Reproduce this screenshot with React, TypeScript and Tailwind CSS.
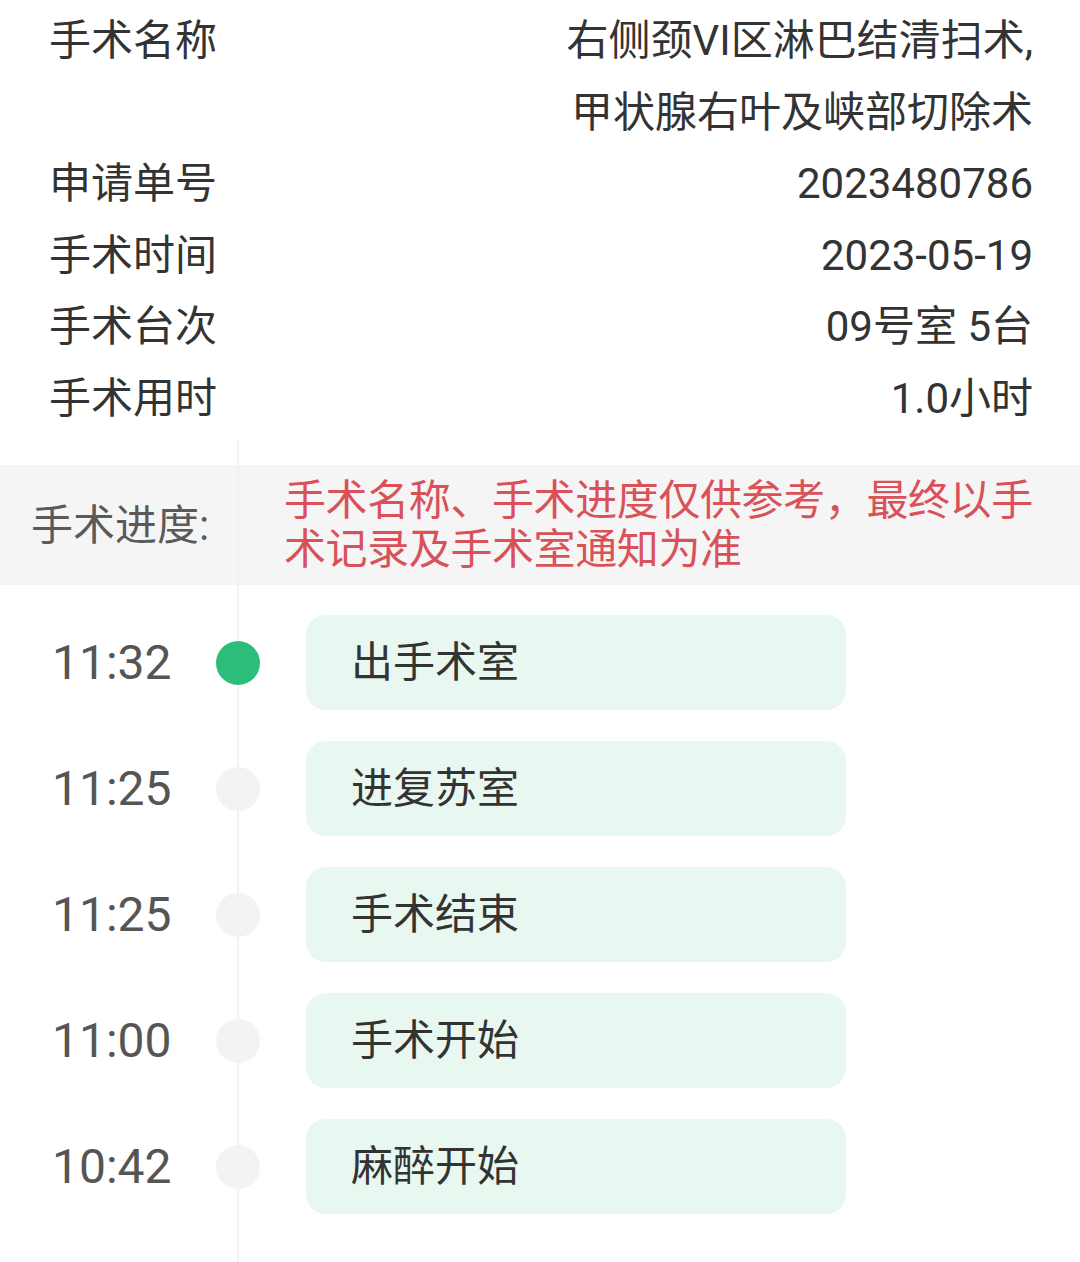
import React from "react";

const INFO = [
  { label: "手术名称", value: ["右侧颈VI区淋巴结清扫术,", "甲状腺右叶及峡部切除术"] },
  { label: "申请单号", value: ["2023480786"] },
  { label: "手术时间", value: ["2023-05-19"] },
  { label: "手术台次", value: ["09号室 5台"] },
  { label: "手术用时", value: ["1.0小时"] },
];

const STEPS = [
  { time: "11:32", name: "出手术室", active: true },
  { time: "11:25", name: "进复苏室" },
  { time: "11:25", name: "手术结束" },
  { time: "11:00", name: "手术开始" },
  { time: "10:42", name: "麻醉开始" },
];

export default function App() {
  return (
    <div
      className="w-[1080px] min-h-[1262px] bg-white text-[#333]"
      style={{ fontFamily: 'Roboto, "Noto Sans CJK SC", sans-serif' }}
    >
      <div className="pl-[49px] pr-[47px] pt-[5px] text-[42px] leading-[71.5px]">
        {INFO.map((row) => (
          <div key={row.label} className="flex justify-between">
            <span>{row.label}</span>
            <div className="text-right">
              {row.value.map((v) => (
                <div key={v}>{v}</div>
              ))}
            </div>
          </div>
        ))}
      </div>

      <div className="relative mt-[6px] pt-[25px] pb-[48px]">
        <div className="absolute left-[237px] top-0 bottom-0 w-[2px] bg-[#f2f2f2] z-10" />

        <div className="flex items-center h-[120px] bg-[#f5f5f5] pl-[31px]">
          <span className="w-[253px] shrink-0 text-[42px] text-[#5a5a5a]">手术进度:</span>
          <p className="whitespace-nowrap text-[42px] leading-[49px] tracking-[-0.4px] text-[#d9525a]">
            手术名称、手术进度仅供参考，最终以手
            <br />
            术记录及手术室通知为准
          </p>
        </div>

        <div className="flex flex-col gap-[31px] pt-[30px]">
          {STEPS.map((s, i) => (
            <div key={i} className="relative z-20 flex items-center pl-[52px]">
              <span className="w-[164px] text-[48px] text-[#555]">{s.time}</span>
              <span
                className={`w-[44px] h-[44px] rounded-full ${
                  s.active ? "bg-[#2dbd7a]" : "bg-[#f3f3f3]"
                }`}
              />
              <div className="ml-[46px] w-[540px] h-[95px] rounded-[20px] bg-[#e8f7f0] flex items-center pl-[45px] text-[42px] text-[#333]">
                {s.name}
              </div>
            </div>
          ))}
        </div>
      </div>
    </div>
  );
}
